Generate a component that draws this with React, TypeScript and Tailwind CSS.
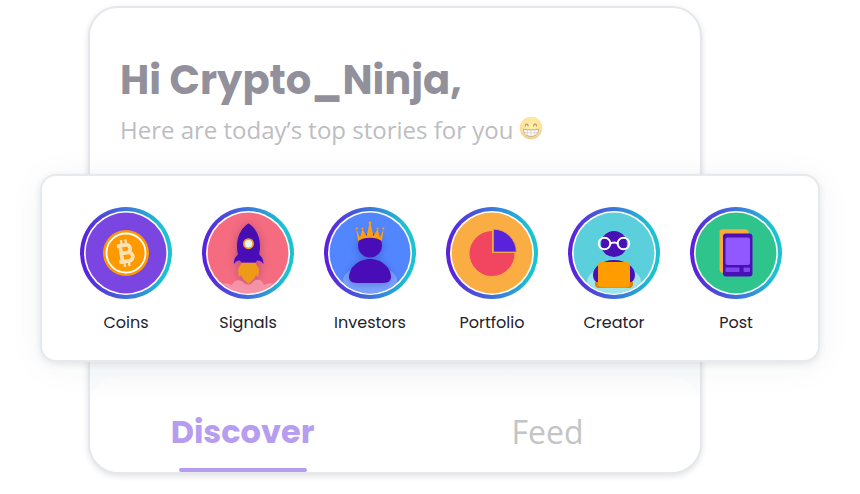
import type { ReactNode } from "react";

const ROUNDED = "font-['Poppins','Inter',sans-serif]";
const HUMANIST = "font-['Open_Sans','Noto_Sans',sans-serif]";

function Story({ id, label, fill, children }: { id: string; label: string; fill: string; children: ReactNode }) {
  return (
    <li>
      <button type="button" className="flex w-23 flex-col items-center gap-3">
        <svg viewBox="0 0 92 92" className="size-23" aria-hidden="true">
          <defs>
            <linearGradient id={`ring-${id}`} x1="0" y1="0.5" x2="1" y2="0.45">
              <stop offset="0.04" stopColor="#5a22dc" />
              <stop offset="0.5" stopColor="#3f72da" />
              <stop offset="0.9" stopColor="#1cc2d2" />
            </linearGradient>
            <clipPath id={`disc-${id}`}>
              <circle cx="46" cy="46" r="40.4" />
            </clipPath>
            <filter id={`soft-${id}`} x="-50%" y="-50%" width="200%" height="200%">
              <feDropShadow dx="0" dy="1" stdDeviation="4" floodColor="#26105c" floodOpacity="0.28" />
            </filter>
          </defs>
          <circle cx="46" cy="46" r="46" fill={`url(#ring-${id})`} />
          <circle cx="46" cy="46" r="42" fill="#fff" />
          <circle cx="46" cy="46" r="40.4" fill={fill} />
          <g clipPath={`url(#disc-${id})`}>{children}</g>
        </svg>
        <span className={`${ROUNDED} text-base leading-6 text-[#23222d]`}>{label}</span>
      </button>
    </li>
  );
}

function Coin() {
  return (
    <>
      <circle cx="46" cy="46" r="23" fill="#ff9900" />
      <circle cx="46" cy="46" r="19.5" fill="none" stroke="#fff" strokeWidth="1.8" />
      <g transform="rotate(-9 46 46)" fill="none" stroke="#ffe0b3">
        <path d="M41.300 38h5.700a3.900 3.900 0 0 1 0 7.800h-5.700M47 45.800h1a4.200 4.200 0 0 1 0 8.400h-6.700M41.300 36.200V56" strokeWidth="3.800" />
        <path d="M38 38h4M38 54.200h4" strokeWidth="3.600" />
        <path d="M43 32.500v5M47.500 32.500v5M43 54.500v5M47.500 54.500v5" strokeWidth="2.400" />
      </g>
    </>
  );
}

function Rocket() {
  return (
    <>
      <g filter="url(#soft-signals)">
        <path d="M39.700 56h13.600c1 1.500 1.800 3.500 3.400 5.500.5 3.500 0 6-1.200 8.500l-1.500-2.500c-1 4-4 6.500-7.500 9-3.500-2.500-6.500-5-7.500-9L37.500 70c-1.200-2.500-1.600-5-1.100-8.500 1.600-2 2.400-4 3.300-5.500Z" fill="#ed9b18" />
        <path d="M46.500 16.500c6 3.500 11.500 11.500 11.500 22.500 0 4-.4 6-.8 8.500 3 2.500 4.600 5.500 4.100 9.500-1.500-2.500-3.500-3.500-6.300-3.500l-1.200 2H39.200l-1.200-2c-2.800 0-4.500 1-6 3.500-.5-4 1-7 4-9.500-.6-2.500-1-4.500-1-8.500 0-11 5.500-19 11.500-22.500Z" fill="#4a10b8" />
      </g>
      <path d="M46.500 16.500c4 2.500 7.500 6.500 9.300 12-5 1-13.500 1-18.600 0 1.800-5.500 5.300-9.500 9.300-12Z" fill="#4210a8" opacity="0.5" />
      <circle cx="46.500" cy="36.700" r="4.600" fill="#dff5fa" stroke="#f3a01c" strokeWidth="1.800" />
      <path d="M10 79c5-2 8-3 12-2 3-1 5 0 8 1 2-6 9-6 12-2 3 2 6 2 8 0 4-5 10-4 12 2 4-2 8-2 12-1 4-1 6 0 10 2v14H10Z" fill="#f49bae" opacity="0.85" />
    </>
  );
}

function Investor() {
  return (
    <>
      <ellipse cx="46" cy="73" rx="27" ry="14" fill="#7ba3ff" />
      <g filter="url(#soft-investors)" fill="#4a10b8">
        <circle cx="46" cy="38.500" r="12" />
        <path d="M33 76c-6 0-8-3-8-6 0-9 9-18 21-18s21 9 21 18c0 3-2 6-8 6Z" />
      </g>
      <g fill="#ff9d0a">
        <path d="m32.300 22 3.700 8.500 2.200-8h.6l3.700 6.500 3.100-13h.8l3.100 13 3.700-6.500h.6l2.200 8 3.700-8.500-1.700 12c-6-4.500-18-4.500-24 0Z" />
        <circle cx="32.700" cy="21.500" r="1.100" />
        <circle cx="38.500" cy="21.500" r="1.100" />
        <circle cx="46" cy="15.800" r="1.400" />
        <circle cx="53.500" cy="21.500" r="1.100" />
        <circle cx="59.300" cy="21.500" r="1.100" />
      </g>
    </>
  );
}

function Portfolio() {
  return (
    <>
      <path d="M46 46V24a22.500 22.500 0 1 0 22.500 22Z" fill="#f2455f" />
      <path d="M47.500 22.200V45h22.800a22.800 22.800 0 0 0-22.800-22.800Z" fill="#5b22dc" stroke="#e79e43" strokeWidth="0.800" />
    </>
  );
}

function Creator() {
  return (
    <>
      <ellipse cx="46" cy="74" rx="27" ry="14" fill="#9fe3eb" />
      <circle cx="46" cy="37" r="13" fill="#4a10b8" />
      <path d="M31 77c-4-2-6-5-6-9 0-8 9-15 21-15s21 7 21 15c0 4-2 7-6 9Z" fill="#4a10b8" />
      <g fill="none" stroke="#fff" strokeWidth="1.900">
        <circle cx="36.500" cy="36.500" r="5.800" />
        <circle cx="55.500" cy="36.500" r="5.800" />
        <path d="M42 37c2-2 6-2 8 0" />
      </g>
      <path d="M27 75h38v2q0 4-4 4H31q-4 0-4-4Z" fill="#d98213" />
      <rect x="30" y="55" width="32" height="25.500" rx="4" fill="#ff9d00" />
    </>
  );
}

function Post() {
  return (
    <>
      <rect x="29.500" y="22.300" width="29" height="43.500" rx="3" fill="#faa93c" />
      <rect x="33" y="26.500" width="29.500" height="43" rx="3" fill="#4a10b8" />
      <rect x="35.500" y="30.500" width="24.500" height="27.500" rx="2" fill="#9158ff" />
      <rect x="35.500" y="60.500" width="14" height="4.500" rx="1" fill="#8145ee" />
      <rect x="53.500" y="60.500" width="6.500" height="4.500" rx="1" fill="#8145ee" />
    </>
  );
}

function Grin() {
  return (
    <svg viewBox="0 0 24 24" className="mb-1 size-6" role="img" aria-label="Beaming face">
      <defs>
        <radialGradient id="grin" cx="0.5" cy="0.4" r="0.6">
          <stop offset="0" stopColor="#fff2a8" />
          <stop offset="0.75" stopColor="#fee298" />
          <stop offset="1" stopColor="#f2c593" />
        </radialGradient>
      </defs>
      <circle cx="12" cy="12" r="11.200" fill="url(#grin)" />
      <path d="M6.200 10c.4-2.700 2.600-2.700 3 0M14.600 10c.4-2.700 2.600-2.700 3 0" fill="none" stroke="#a99173" strokeWidth="1.100" strokeLinecap="round" />
      <path d="M4.300 13.200c5 1 10.400 1 15.400 0-.3 4.200-3.200 7.200-7.700 7.200s-7.400-3-7.700-7.200Z" fill="#fff" stroke="#ad9b84" strokeWidth="0.800" />
      <path d="M5 16.300c4.500.8 9.500.8 14 0M8.300 14v4.700M12 14v6M15.700 14v4.700" fill="none" stroke="#c9c3ba" strokeWidth="0.600" />
    </svg>
  );
}

const stories = [
  { id: "coins", label: "Coins", fill: "#7a45e0", art: <Coin /> },
  { id: "signals", label: "Signals", fill: "#f56b80", art: <Rocket /> },
  { id: "investors", label: "Investors", fill: "#5286ff", art: <Investor /> },
  { id: "portfolio", label: "Portfolio", fill: "#f9ad43", art: <Portfolio /> },
  { id: "creator", label: "Creator", fill: "#5bd0dc", art: <Creator /> },
  { id: "post", label: "Post", fill: "#30c48d", art: <Post /> },
];

export default function App() {
  return (
    <main className="overflow-hidden bg-white pt-1.5 pr-[158px] pb-5 pl-[88px]">
      <section className="rounded-[30px] border-2 border-[#e4e8ec] bg-white shadow-[0_2px_6px_rgba(0,0,0,0.12)]">
        <header className="px-[30px] pt-12 pb-[26px]">
          <h1 className={`${ROUNDED} text-[40px] leading-[48px] font-bold whitespace-nowrap text-[#92909a]`}>
            Hi Crypto_Ninja,
          </h1>
          <p className={`${HUMANIST} mt-2 flex items-center gap-1.5 text-2xl leading-9 whitespace-nowrap text-[#bdbdc2]`}>
            Here are today’s top stories for you
            <Grin />
          </p>
        </header>

        <nav
          aria-label="Stories"
          className="relative -mr-[120px] -ml-[50px] rounded-2xl border-2 border-[#e6eaee] bg-white pt-[31px] pr-9 pb-[25px] pl-[38px] shadow-[0_2px_6px_rgba(60,70,90,0.12),0_4px_36px_rgba(40,50,60,0.05)]"
        >
          <ul className="flex justify-between">
            {stories.map((s) => (
              <Story key={s.id} id={s.id} label={s.label} fill={s.fill}>
                {s.art}
              </Story>
            ))}
          </ul>
        </nav>

        <div className="rounded-b-[30px] bg-linear-to-b from-[#f8fafc] from-5% to-white to-80% pt-3.5">
          <div role="tablist" className="grid grid-cols-2 rounded-[30px] bg-linear-to-b from-[#fcfcfd] to-white to-30%">
            <button
              type="button"
              role="tab"
              aria-selected="true"
              className={`${ROUNDED} flex flex-col items-center pt-9 text-[32px] leading-10 font-bold text-[#b79df0]`}
            >
              Discover
              <span className="mt-4 h-1 w-32 rounded-full bg-[#b79df0]" />
            </button>
            <button
              type="button"
              role="tab"
              aria-selected="false"
              className={`${HUMANIST} flex flex-col items-center pt-9 text-[32px] leading-10 text-[#c4c4c4]`}
            >
              Feed
            </button>
          </div>
        </div>
      </section>
    </main>
  );
}
